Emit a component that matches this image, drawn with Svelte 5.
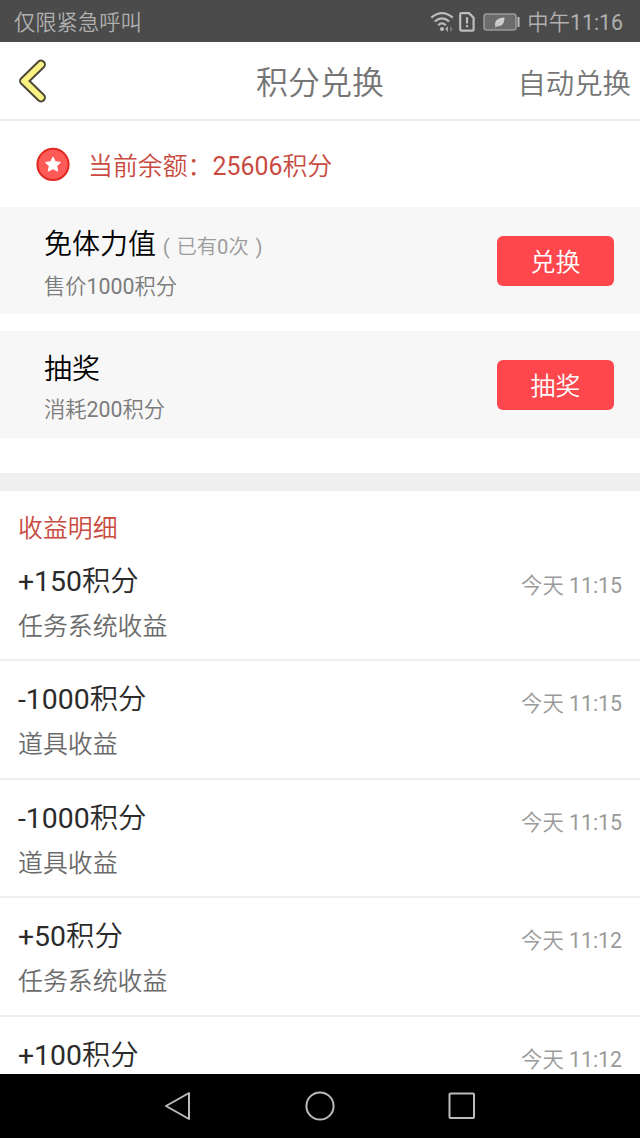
<script>
  const offers = [
    { title: '免体力值', owned: '已有0次', note: '售价1000积分', action: '兑换' },
    { title: '抽奖', owned: '', note: '消耗200积分', action: '抽奖' },
  ];

  const records = [
    { amount: '+150积分', source: '任务系统收益', time: '今天 11:15' },
    { amount: '-1000积分', source: '道具收益', time: '今天 11:15' },
    { amount: '-1000积分', source: '道具收益', time: '今天 11:15' },
    { amount: '+50积分', source: '任务系统收益', time: '今天 11:12' },
    { amount: '+100积分', source: '', time: '今天 11:12' },
  ];
</script>

<div class="screen">
  <div class="status">
    <span>仅限紧急呼叫</span>
    <div class="status-right">
      <svg class="wifi" width="25" height="22" viewBox="0 0 25 22" fill="none" stroke="#bdbdbd" stroke-width="2.2">
        <path d="M1.3 6.6Q12 -2.4 22.7 6.6M4.8 10.5Q12 4.2 19.2 10.5M8.2 14.2Q12 10.7 15.8 14.2" />
        <circle cx="12" cy="18" r="2" fill="#bdbdbd" stroke="none" />
        <path d="M18 15l-3 3 3 3z" fill="#a5a5a5" stroke="none" />
        <path d="M20 15l3 3-3 3z" fill="#777" stroke="none" />
      </svg>
      <svg class="sim" width="16" height="20" viewBox="0 0 16 20" fill="none" stroke="#bdbdbd" stroke-width="2.2">
        <path d="M2.5 1.2H10L14.6 5.8V17.2Q14.6 18.6 13.2 18.6H2.6Q1.2 18.6 1.2 17.2V2.6Q1.2 1.2 2.5 1.2Z" />
        <path d="M8 5.2V11.5M8 13V15.2" />
      </svg>
      <svg class="battery" width="38" height="18" viewBox="0 0 38 18">
        <rect x="1" y="1" width="32" height="16" rx="2.5" fill="#6c6c6c" stroke="#999" stroke-width="1.5" />
        <rect x="34.5" y="4" width="2" height="10" fill="#bdbdbd" />
        <path d="M12.5 13.8C11 8 14 5 21.5 4.5C21.5 10.5 18.5 13.5 13.8 13.4L12.3 14.8Z" fill="#d0d0d0" />
        <path d="M13 13.2L17.5 8.5" stroke="#999" stroke-width=".6" />
      </svg>
      <span>中午11:16</span>
    </div>
  </div>

  <header>
    <svg class="back" width="30" height="46" viewBox="0 0 30 46" fill="none" stroke-linecap="round" stroke-linejoin="round">
      <path d="M23 6.5L6 23L23 39.5" stroke="#4b4939" stroke-width="9.8" />
      <path d="M23 6.5L6 23L23 39.5" stroke="#fbf284" stroke-width="5.8" />
    </svg>
    <h1>积分兑换</h1>
    <span class="auto">自动兑换</span>
  </header>

  <div class="balance">
    <svg width="34" height="34" viewBox="0 0 34 34">
      <circle cx="17" cy="17.4" r="15.6" fill="#fe5a58" stroke="#e0281f" stroke-width="2" />
      <path d="M17 10L19.3 14.7L24.5 15.4L20.7 19L21.7 24.2L17 21.7L12.3 24.2L13.3 19L9.5 15.4L14.7 14.7Z" fill="#fff" stroke="#fff" stroke-width="1" stroke-linejoin="round" />
    </svg>
    <span>当前余额：25606积分</span>
  </div>

  {#each offers as offer}
    <div class="offer">
      <div>
        <div class="offer-title">
          {offer.title}{#if offer.owned}<small><i>(</i>{offer.owned}<i>)</i></small>{/if}
        </div>
        <div class="offer-note">{offer.note}</div>
      </div>
      <button>{offer.action}</button>
    </div>
  {/each}

  <div class="details">
    <h2>收益明细</h2>
    {#each records as record}
      <div class="record">
        <div>
          <div class="amount">{record.amount}</div>
          {#if record.source}
            <div class="source">{record.source}</div>
          {/if}
        </div>
        <span class="time">{record.time}</span>
      </div>
    {/each}
  </div>

  <nav>
    <svg width="30" height="32" viewBox="0 0 30 32"><path d="M26 3V29L3 16Z" /></svg>
    <svg width="32" height="32" viewBox="0 0 32 32"><circle cx="16" cy="16" r="13.6" /></svg>
    <svg width="30" height="30" viewBox="0 0 30 30"><rect x="2.5" y="2.5" width="24.5" height="24.5" rx="1" /></svg>
  </nav>
</div>

<style>
  :global(body) {
    margin: 0;
  }
  .screen {
    display: flex;
    flex-direction: column;
    width: 640px;
    height: 1138px;
    overflow: hidden;
    background: #fff;
    font-family: Roboto, "Noto Sans CJK SC DemiLight", "Noto Sans CJK SC", sans-serif;
    font-size: 24.9px;
  }
  .status {
    flex: none;
    display: flex;
    align-items: center;
    justify-content: space-between;
    box-sizing: border-box;
    height: 42px;
    padding: 2px 17px 0 14px;
    background: #4b4b4b;
    color: #b0b0b0;
    font-size: 21.3px;
    line-height: 39px;
  }
  .status span {
    padding-top: 1px;
  }
  .status-right {
    display: flex;
    align-items: center;
  }
  .sim {
    margin-left: 4px;
  }
  .battery {
    margin: 0 6px 0 8px;
  }
  header {
    flex: none;
    display: grid;
    grid-template-columns: 1fr auto 1fr;
    align-items: center;
    box-sizing: border-box;
    height: 79px;
    padding: 0 9px 0 18px;
    border-bottom: 2px solid #ececec;
    color: #757575;
  }
  h1 {
    margin: 0 9px 0 0;
    padding-top: 6px;
    font-size: 32px;
    font-weight: 400;
    line-height: 71px;
  }
  .auto {
    justify-self: end;
    padding-top: 2px;
    margin-left: -9px;
    font-size: 28.4px;
  }
  .balance {
    flex: none;
    display: flex;
    align-items: center;
    gap: 18px;
    height: 86px;
    padding-left: 36px;
    color: #c94a3f;
  }
  .offer {
    flex: none;
    display: flex;
    align-items: center;
    justify-content: space-between;
    box-sizing: border-box;
    height: 107px;
    margin-bottom: 17px;
    padding: 0 26px 0 44px;
    background: #f7f7f7;
  }
  .offer-title {
    padding-top: 8px;
    color: #000;
    font-size: 28px;
    line-height: 42px;
  }
  small {
    color: #9c9c9c;
    font-size: 20.3px;
  }
  small i {
    display: inline-block;
    width: 20.5px;
    font-style: normal;
    text-align: center;
  }
  .offer-note {
    color: #7b7b7b;
    font-size: 21.3px;
    line-height: 38px;
  }
  button {
    width: 117px;
    height: 50px;
    padding: 4px 0 0;
    border: 0;
    border-radius: 6px;
    background: #fe474d;
    color: #fff;
    font: inherit;
    line-height: 46px;
  }
  .details {
    flex: 1;
    min-height: 0;
    margin-top: 18px;
    border-top: 18px solid #efefef;
    overflow: hidden;
  }
  h2 {
    margin: 0;
    padding: 13px 18px 0;
    color: #c94a3f;
    font-size: 24.9px;
    font-weight: 400;
    line-height: 50px;
    height: 38.5px;
  }
  .record {
    display: flex;
    justify-content: space-between;
    box-sizing: border-box;
    height: 118.6px;
    padding: 17px 18px 0;
    border-bottom: 2px solid #eee;
  }
  .amount {
    color: #2b2b2b;
    font-size: 28.4px;
    line-height: 44px;
  }
  .source {
    color: #6b6b6b;
    line-height: 46px;
  }
  .time {
    color: #9a9a9a;
    font-size: 21.3px;
    line-height: 51px;
  }
  nav {
    flex: none;
    display: flex;
    align-items: center;
    justify-content: space-between;
    box-sizing: border-box;
    height: 64px;
    padding: 0 163px 0 163px;
    background: #000;
  }
  nav svg {
    fill: none;
    stroke: #bcbcbc;
    stroke-width: 2;
    stroke-linejoin: round;
  }
</style>
